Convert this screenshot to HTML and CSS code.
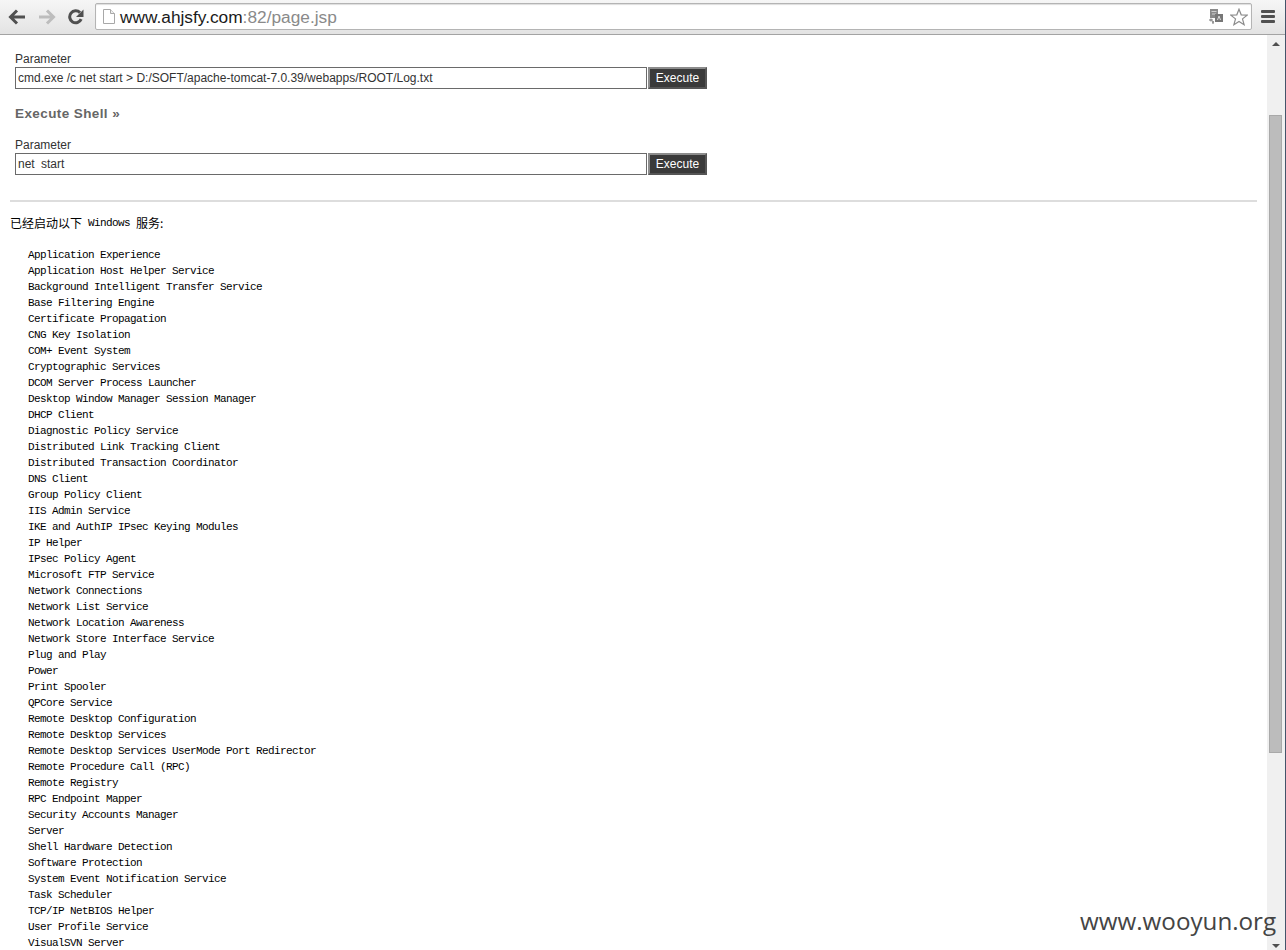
FILE: index.html
```html
<!DOCTYPE html>
<html lang="en">
<head>
<meta charset="utf-8">
<title>www.ahjsfy.com:82/page.jsp</title>
<link rel="stylesheet" href="styles.css">
</head>
<body>
<div class="window">
  <header class="toolbar">
    <nav class="nav">
      <svg class="nav-icon" width="18" height="16" viewBox="0 0 18 16"><path d="M9 1.5 2.5 8 9 14.5M3 8h14" fill="none" stroke="#505050" stroke-width="3"/></svg>
      <svg class="nav-icon" width="18" height="16" viewBox="0 0 18 16"><path d="M9 1.5 15.5 8 9 14.5M15 8H1" fill="none" stroke="#bdbdbd" stroke-width="3"/></svg>
      <svg class="nav-icon" width="16" height="16" viewBox="0 0 16 16"><path d="M13.2 10.2A6 6 0 1 1 12 3.6" fill="none" stroke="#505050" stroke-width="3"/><path d="M15.5 0.5v7.5h-7.5z" fill="#505050"/></svg>
    </nav>
    <div class="omnibox">
      <svg class="page-icon" width="12" height="15" viewBox="0 0 12 15"><path d="M.5.5h7l4 4v10H.5z" fill="#fff" stroke="#a8a8a8"/><path d="M7.500.5v4h4" fill="#eee" stroke="#a8a8a8"/></svg>
      <span class="url"><span class="url-host">www.ahjsfy.com</span>:82/page.jsp</span>
      <svg class="translate-icon" width="15" height="15" viewBox="0 0 15 15"><rect x="1" y="0" width="8" height="9" fill="#8a8a8a"/><path d="M2.500 2.500h5M3 5h4" stroke="#cfcfcf"/><rect x="6" y="5" width="8" height="8" fill="#777"/><path d="M8.500 11 10 7l1.500 4" fill="none" stroke="#ddd"/><path d="M0 11h4M2 9.500v3M3 13h2M4 12v3" stroke="#777"/></svg>
      <svg class="star-icon" width="18" height="18" viewBox="0 0 18 18"><path d="M9 1.200 11.200 6.800 17.200 7.100 12.500 10.900 14.100 16.700 9 13.400 3.900 16.700 5.500 10.900.8 7.100 6.800 6.800z" fill="#fff" stroke="#8c8c8c" stroke-width="1.200"/></svg>
    </div>
    <div class="menu-button"><span></span><span></span><span></span></div>
  </header>
  <div class="viewport">
    <main class="page">
      <form class="shell-form">
        <label class="field-label">Parameter</label>
        <div class="field-row">
          <input class="field-input" type="text" value="cmd.exe /c net start &gt; D:/SOFT/apache-tomcat-7.0.39/webapps/ROOT/Log.txt">
          <button class="exec-button" type="button">Execute</button>
        </div>
      </form>
      <h3 class="section-title">Execute Shell »</h3>
      <form class="shell-form">
        <label class="field-label">Parameter</label>
        <div class="field-row">
          <input class="field-input field-input-wide" type="text" value="net start">
          <button class="exec-button" type="button">Execute</button>
        </div>
      </form>
      <hr class="divider">
      <div class="output-head">
        <span class="cjk">已经启动以下</span>
        <span class="latin">Windows</span>
        <span class="cjk">服务:</span>
      </div>
      <pre class="output">   Application Experience
   Application Host Helper Service
   Background Intelligent Transfer Service
   Base Filtering Engine
   Certificate Propagation
   CNG Key Isolation
   COM+ Event System
   Cryptographic Services
   DCOM Server Process Launcher
   Desktop Window Manager Session Manager
   DHCP Client
   Diagnostic Policy Service
   Distributed Link Tracking Client
   Distributed Transaction Coordinator
   DNS Client
   Group Policy Client
   IIS Admin Service
   IKE and AuthIP IPsec Keying Modules
   IP Helper
   IPsec Policy Agent
   Microsoft FTP Service
   Network Connections
   Network List Service
   Network Location Awareness
   Network Store Interface Service
   Plug and Play
   Power
   Print Spooler
   QPCore Service
   Remote Desktop Configuration
   Remote Desktop Services
   Remote Desktop Services UserMode Port Redirector
   Remote Procedure Call (RPC)
   Remote Registry
   RPC Endpoint Mapper
   Security Accounts Manager
   Server
   Shell Hardware Detection
   Software Protection
   System Event Notification Service
   Task Scheduler
   TCP/IP NetBIOS Helper
   User Profile Service
   VisualSVN Server</pre>
    </main>
    <aside class="scrollbar">
      <span class="arrow-up"></span>
      <span class="thumb"></span>
      <span class="arrow-down"></span>
    </aside>
  </div>
  <div class="watermark">www.wooyun.org</div>
</div>
</body>
</html>
```
FILE: styles.css
```css
html, body {
  margin: 0;
  padding: 0;
  height: 100%;
  overflow: hidden;
  background: #fff;
}
.window {
  position: relative;
  display: flex;
  flex-direction: column;
  width: 1285px;
  height: 950px;
  border-right: 1px solid #44546a;
  overflow: hidden;
  font-family: "Liberation Sans", Arial, sans-serif;
}
.toolbar {
  flex: none;
  box-sizing: border-box;
  height: 35px;
  display: flex;
  align-items: flex-start;
  background: linear-gradient(#f6f6f6, #e3e3e3);
  border-bottom: 1px solid #a3a3a3;
}
.nav {
  display: flex;
  align-items: center;
  width: 95px;
  height: 33px;
  box-sizing: border-box;
  padding-left: 8px;
  gap: 12px;
}
.omnibox {
  box-sizing: border-box;
  display: flex;
  align-items: center;
  width: 1157px;
  height: 27px;
  margin-top: 3px;
  padding: 0 3px 0 7px;
  background: #fff;
  border: 1px solid #b4b4b4;
  border-radius: 2px;
  box-shadow: inset 0 1px 1px #ddd;
}
.page-icon { flex: none; margin-right: 5px; }
.url {
  flex: 1;
  font-size: 17.3px;
  line-height: 26px;
  color: #8a8a8a;
  white-space: nowrap;
}
.url-host { color: #1a1a1a; }
.translate-icon { flex: none; margin-right: 6px; }
.star-icon { flex: none; }
.menu-button {
  display: flex;
  flex-direction: column;
  gap: 2px;
  margin: 10px 0 0 9px;
  width: 14px;
}
.menu-button span {
  display: block;
  height: 3px;
  background: #505050;
  border-radius: 1px;
}
.viewport {
  flex: 1;
  display: flex;
  min-height: 0;
}
.page {
  flex: 1;
  min-width: 0;
  box-sizing: border-box;
  padding: 17px 10px 0;
  overflow: hidden;
}
.shell-form {
  display: block;
  margin: 0 0 0 5px;
}
.field-label {
  display: block;
  font-size: 12px;
  line-height: 15px;
  color: #333;
}
.field-row {
  display: flex;
  gap: 1px;
}
.field-input {
  box-sizing: border-box;
  width: 632px;
  height: 22px;
  margin: 0;
  padding: 0 2px;
  border: 1px solid #6a6a6a;
  background: #fff;
  color: #333;
  font: 12px "Liberation Sans", Arial, sans-serif;
  outline: 0;
}
.field-input-wide { word-spacing: 3px; }
.exec-button {
  box-sizing: border-box;
  width: 59px;
  height: 22px;
  margin: 0;
  padding: 0;
  border: 2px solid;
  border-color: #8c8c8c #555 #555 #8c8c8c;
  background: #3a3a3a;
  color: #fff;
  font: 12px "Liberation Sans", Arial, sans-serif;
}
.section-title {
  margin: 16px 0 16px 5px;
  font-size: 13.5px;
  line-height: 17px;
  font-weight: bold;
  color: #666;
  letter-spacing: .4px;
}
.divider {
  height: 2px;
  margin: 25px 0 13px;
  border: 0;
  background: #ddd;
}
.output-head {
  display: flex;
  gap: 6px;
  height: 16px;
  margin-bottom: 16px;
  color: #000;
}
.latin {
  font-family: "Liberation Mono", monospace;
  font-size: 11px;
  line-height: 16px;
  letter-spacing: -.6px;
}
.cjk {
  height: 16px;
  overflow: hidden;
  font-family: "Noto Sans CJK SC", sans-serif;
  font-size: 12px;
  line-height: 16px;
}
.output {
  margin: 0;
  font-family: "Liberation Mono", monospace;
  font-size: 11px;
  letter-spacing: -.6px;
  line-height: 16px;
  color: #000;
}
.scrollbar {
  flex: none;
  position: relative;
  box-sizing: border-box;
  width: 18px;
  display: flex;
  flex-direction: column;
  align-items: center;
  background: #f0f0f0;
  padding-top: 7px;
}
.arrow-up, .arrow-down {
  flex: none;
  width: 0;
  height: 0;
  border-left: 4px solid transparent;
  border-right: 4px solid transparent;
}
.arrow-up { border-bottom: 4px solid #505050; }
.arrow-down { border-top: 4px solid #505050; margin-top: 191px; }
.thumb {
  flex: none;
  box-sizing: border-box;
  width: 13px;
  height: 638px;
  margin: 69px 0 0 -1px;
  background: #bcbcbc;
  border: 1px solid #a9a9a9;
}
.watermark {
  position: absolute;
  left: 1080px;
  top: 904px;
  font-family: "Open Sans", sans-serif;
  font-size: 24.2px;
  line-height: 33px;
  color: #444;
  white-space: nowrap;
}
```
